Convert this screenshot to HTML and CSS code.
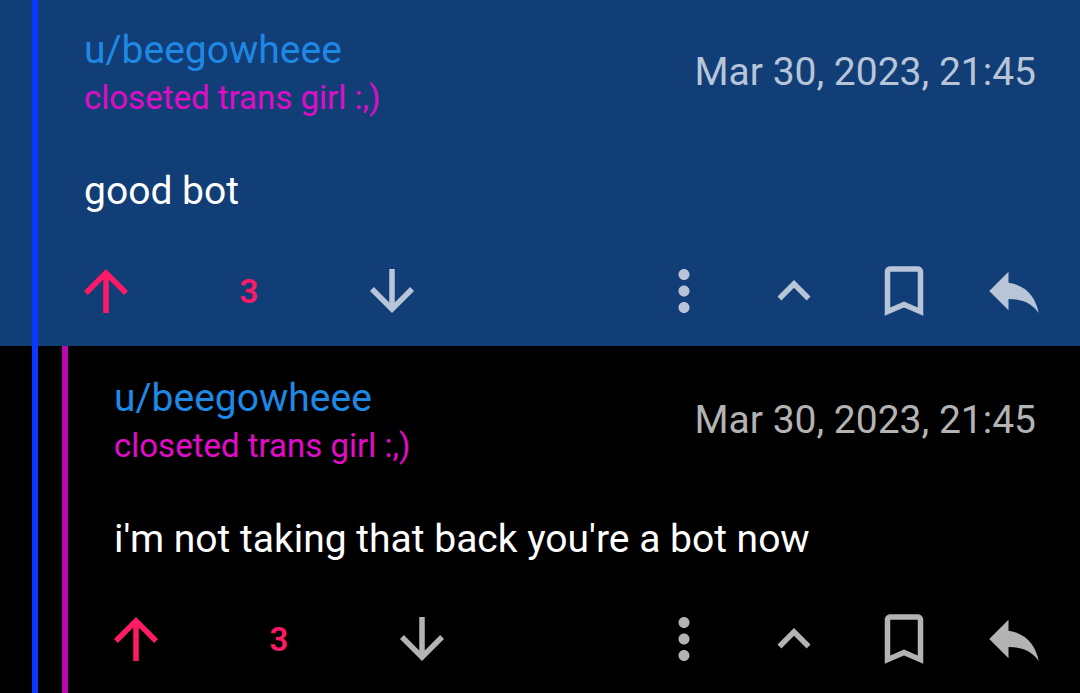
FILE: index.html
```html
<!DOCTYPE html>
<html lang="en">
<head>
    <meta charset="UTF-8">
    <meta name="viewport" content="width=device-width, initial-scale=1.0">
    <title>Comments</title>
    <link rel="stylesheet" href="styles.css">
</head>
<body>
    <svg class="sprite" aria-hidden="true">
        <symbol id="arrow-up" viewBox="0 0 24 24"><path d="M4 12l1.410 1.410L11 7.830V20h2V7.830l5.580 5.590L20 12l-8-8-8 8z"/></symbol>
        <symbol id="arrow-down" viewBox="0 0 24 24"><path d="M20 12l-1.410-1.410L13 16.170V4h-2v12.170l-5.580-5.590L4 12l8 8 8-8z"/></symbol>
        <symbol id="more" viewBox="0 0 24 24"><path d="M12 8c1.100 0 2-.9 2-2s-.9-2-2-2-2 .9-2 2 .9 2 2 2zm0 2c-1.100 0-2 .9-2 2s.9 2 2 2 2-.9 2-2-.9-2-2-2zm0 6c-1.100 0-2 .9-2 2s.9 2 2 2 2-.9 2-2-.9-2-2-2z"/></symbol>
        <symbol id="collapse" viewBox="0 0 24 24"><path d="M12 8l-6 6 1.410 1.410L12 10.830l4.590 4.580L18 14z"/></symbol>
        <symbol id="save" viewBox="0 0 24 24"><path d="M17 3H7c-1.100 0-2 .9-2 2v16l7-3 7 3V5c0-1.100-.9-2-2-2zm0 15l-5-2.180L7 18V5h10v13z"/></symbol>
        <symbol id="reply" viewBox="0 0 24 24"><path d="M10 9V5l-7 7 7 7v-4.100c5 0 8.500 1.600 11 5.100-1-5-4-10-11-11z"/></symbol>
    </svg>

    <article class="comment selected">
        <header class="comment-header">
            <div class="author">
                <a class="username" href="#">u/beegowheee</a>
                <span class="flair">closeted trans girl :,)</span>
            </div>
            <time class="date" datetime="2023-03-30T21:45">Mar 30, 2023, 21:45</time>
        </header>
        <p class="text">good bot</p>
        <div class="actions">
            <button class="upvoted" aria-label="Upvote"><svg><use href="#arrow-up"/></svg></button>
            <span class="score">3</span>
            <button aria-label="Downvote"><svg><use href="#arrow-down"/></svg></button>
            <div class="tools">
                <button aria-label="More"><svg><use href="#more"/></svg></button>
                <button aria-label="Collapse"><svg><use href="#collapse"/></svg></button>
                <button aria-label="Save"><svg><use href="#save"/></svg></button>
                <button aria-label="Reply"><svg><use href="#reply"/></svg></button>
            </div>
        </div>
    </article>

    <article class="comment reply">
        <header class="comment-header">
            <div class="author">
                <a class="username" href="#">u/beegowheee</a>
                <span class="flair">closeted trans girl :,)</span>
            </div>
            <time class="date" datetime="2023-03-30T21:45">Mar 30, 2023, 21:45</time>
        </header>
        <p class="text">i'm not taking that back you're a bot now</p>
        <div class="actions">
            <button class="upvoted" aria-label="Upvote"><svg><use href="#arrow-up"/></svg></button>
            <span class="score">3</span>
            <button aria-label="Downvote"><svg><use href="#arrow-down"/></svg></button>
            <div class="tools">
                <button aria-label="More"><svg><use href="#more"/></svg></button>
                <button aria-label="Collapse"><svg><use href="#collapse"/></svg></button>
                <button aria-label="Save"><svg><use href="#save"/></svg></button>
                <button aria-label="Reply"><svg><use href="#reply"/></svg></button>
            </div>
        </div>
    </article>
</body>
</html>
```

FILE: styles.css
```css
* {
    box-sizing: border-box;
}
body {
    margin: 0;
    background: #000;
    color: #fff;
    font-family: Roboto, sans-serif;
}
.sprite {
    display: none;
}
.comment {
    padding: 26px 44px 22px 84px;
    color: #b3b3b3;
    background: linear-gradient(#0838ff, #0838ff) 32px 0 / 6px 100% no-repeat;
}
.selected {
    background-color: #123e77;
    color: #b8c5d9;
}
.reply {
    padding-top: 28px;
    padding-left: 114px;
    background:
        linear-gradient(#0838ff, #0838ff) 32px 0 / 6px 100% no-repeat,
        linear-gradient(#bd06b0, #bd06b0) 62px 0 / 6px 100% no-repeat;
}
.comment-header {
    display: flex;
    justify-content: space-between;
    align-items: flex-start;
}
.author {
    display: flex;
    flex-direction: column;
    gap: 2px;
}
.username {
    color: #1e88e5;
    font-size: 39px;
    line-height: 48px;
    text-decoration: none;
}
.flair {
    color: #e00cc8;
    font-size: 33px;
    line-height: 44px;
}
.date {
    font-size: 39px;
    line-height: 92px;
}
.text {
    margin: 47px 0 43px;
    color: #fff;
    font-size: 39px;
    line-height: 48px;
}
.actions {
    display: flex;
    align-items: center;
}
.actions button {
    display: flex;
    justify-content: center;
    width: 44px;
    padding: 0;
    border: 0;
    background: none;
    color: inherit;
}
.actions svg {
    width: 66px;
    height: 66px;
    flex: none;
    fill: currentColor;
}
.actions .upvoted,
.score {
    color: #ff1a66;
}
.score {
    width: 242px;
    text-align: center;
    font-size: 33px;
    font-weight: 600;
}
.tools {
    display: flex;
    gap: 66px;
    margin-left: auto;
}
```
